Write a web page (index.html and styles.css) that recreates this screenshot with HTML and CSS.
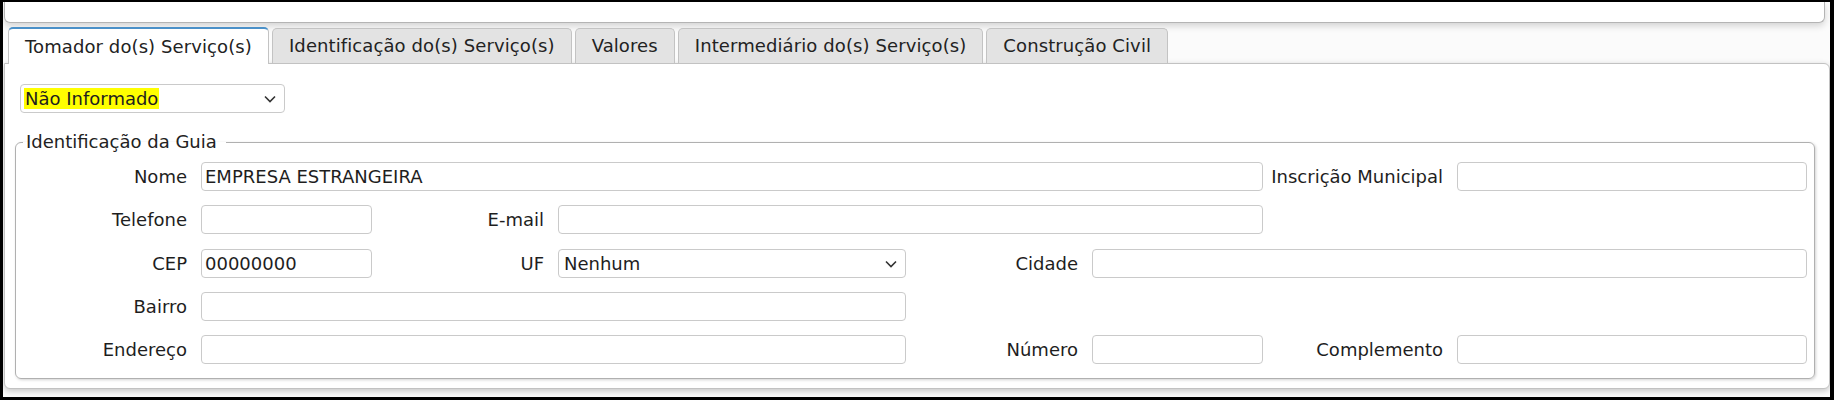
FILE: index.html
```html
<!DOCTYPE html>
<html lang="pt-BR">
<head>
<meta charset="utf-8">
<title>Tomador do(s) Serviço(s)</title>
<link rel="stylesheet" href="styles.css">
</head>
<body>
<div class="frame">
  <div class="top-panel"></div>
  <div class="tabs">
    <div class="tab active">Tomador do(s) Serviço(s)</div>
    <div class="tab">Identificação do(s) Serviço(s)</div>
    <div class="tab">Valores</div>
    <div class="tab">Intermediário do(s) Serviço(s)</div>
    <div class="tab">Construção Civil</div>
  </div>
  <div class="panel">
    <div class="select tipo">
      <span class="hl">Não Informado</span>
      <svg class="chev" width="12" height="8" viewBox="0 0 12 8"><polyline points="1,1.5 6,6.5 11,1.5" fill="none" stroke="#333" stroke-width="1.6"/></svg>
    </div>
    <fieldset class="guia">
      <legend>Identificação da Guia</legend>
      <div class="grid">
        <label class="lbl c1">Nome</label>
        <input class="inp c2-6" type="text" value="EMPRESA ESTRANGEIRA">
        <label class="lbl c7">Inscrição Municipal</label>
        <input class="inp c8" type="text" value="">

        <label class="lbl c1">Telefone</label>
        <input class="inp c2" type="text" value="">
        <label class="lbl c3">E-mail</label>
        <input class="inp c4-6" type="text" value="">

        <label class="lbl c1">CEP</label>
        <input class="inp c2" type="text" value="00000000">
        <label class="lbl c3">UF</label>
        <div class="select c4">
          <span>Nenhum</span>
          <svg class="chev" width="12" height="8" viewBox="0 0 12 8"><polyline points="1,1.5 6,6.5 11,1.5" fill="none" stroke="#333" stroke-width="1.6"/></svg>
        </div>
        <label class="lbl c5">Cidade</label>
        <input class="inp c6-8" type="text" value="">

        <label class="lbl c1">Bairro</label>
        <input class="inp c2-4" type="text" value="">

        <label class="lbl c1">Endereço</label>
        <input class="inp c2-4" type="text" value="">
        <label class="lbl c5">Número</label>
        <input class="inp c6" type="text" value="">
        <label class="lbl c7">Complemento</label>
        <input class="inp c8" type="text" value="">
      </div>
    </fieldset>
  </div>
</div>
</body>
</html>
```
FILE: styles.css
```css
* { box-sizing: border-box; }
html, body { margin: 0; padding: 0; background: #000; }
body {
  font-family: Verdana, "DejaVu Sans", sans-serif;
  font-size: 18px;
  color: #1e1e1e;
}
.frame {
  width: 1834px;
  height: 400px;
  overflow: hidden;
  border-style: solid;
  border-color: #000;
  border-width: 2px 4px 3px 3px;
  background: #fbfbfb;
}
.top-panel {
  height: 21px;
  margin: 0 5px 0 1px;
  background: #fff;
  border: 1px solid #b4b4b4;
  border-top: 0;
  border-radius: 0 0 6px 6px;
  box-shadow: 0 3px 7px rgba(0,0,0,0.16);
}
.tabs {
  display: flex;
  align-items: flex-end;
  gap: 3px;
  margin-top: 4px;
  padding-left: 5px;
  position: relative;
  z-index: 1;
}
.tab {
  line-height: 22px;
  padding: 6px 16px 6px 16px;
  border: 1px solid #c3c3c3;
  border-bottom: 0;
  border-radius: 5px 5px 0 0;
  background: #e3e3e3;
  color: #222;
  white-space: nowrap;
  letter-spacing: 0.1px;
}
.tab.active {
  background: #fff;
  border-top: 2px solid #4a90c8;
  padding-top: 7px;
  margin-bottom: -1px;
}
.panel {
  margin-left: 1px;
  background: #fff;
  border: 1px solid #c2c2c2;
  border-radius: 0 6px 6px 6px;
  box-shadow: 0 2px 6px rgba(0,0,0,0.22);
  padding: 20px 14px 9px 10px;
}
.select {
  height: 29px;
  border: 1px solid #cacaca;
  border-radius: 4px;
  background: #fff;
  display: flex;
  align-items: center;
  padding-left: 5px;
  position: relative;
  line-height: 21px;
}
.select .chev {
  position: absolute;
  right: 8px;
  top: 10px;
}
.select.tipo {
  width: 265px;
  margin-left: 5px;
  padding-left: 3px;
}
.hl {
  background: #ffff00;
  padding: 0 1px;
}
.guia {
  margin: 18px 0 0 0;
  border: 1px solid #b0b0b0;
  border-radius: 6px;
  box-shadow: 1px 1px 3px rgba(0,0,0,0.18);
  padding: 9px 7px 14px 7px;
  min-width: 0;
}
.guia legend {
  line-height: 22px;
  padding: 0 9px 0 3px;
  margin-left: 0;
  color: #222;
}
.grid {
  display: grid;
  grid-template-columns: 178px 171px 186px 348px 186px 171px 194px 1fr;
  grid-auto-rows: 29px;
  row-gap: 14.25px;
}
.lbl {
  text-align: right;
  padding-right: 14px;
  align-self: center;
  white-space: nowrap;
  color: #1e1e1e;
}
.inp {
  height: 29px;
  border: 1px solid #cacaca;
  border-radius: 4px;
  background: #fff;
  font: inherit;
  color: #1e1e1e;
  padding: 0 3px;
  width: 100%;
}
.c1 { grid-column: 1; }
.c2 { grid-column: 2; }
.c3 { grid-column: 3; }
.c4 { grid-column: 4; }
.c5 { grid-column: 5; }
.c6 { grid-column: 6; }
.c7 { grid-column: 7; }
.c8 { grid-column: 8; }
.c2-6 { grid-column: 2 / 7; }
.c2-4 { grid-column: 2 / 5; }
.c4-6 { grid-column: 4 / 7; }
.c6-8 { grid-column: 6 / 9; }
```
